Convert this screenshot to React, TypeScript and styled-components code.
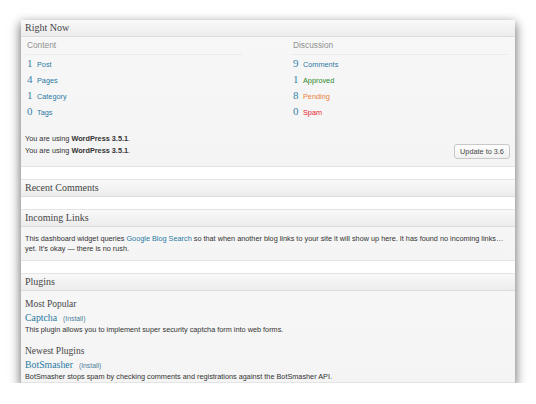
import React from "react";
import styled, { createGlobalStyle } from "styled-components";

const Global = createGlobalStyle`
  html, body { margin: 0; padding: 0; background: #fff; }
  body { font-family: "Liberation Sans", Arial, sans-serif; }
`;

const Frame = styled.div`
  margin: 20px 0 0 21px;
  width: 494px;
  height: 363px;
  background: #fff;
  box-shadow: 0 4px 10px 1px rgba(0, 0, 0, 0.55);
  overflow: hidden;
  display: flex;
  flex-direction: column;
  gap: 12px;
  color: #333;
  font-size: 7.3px;
`;

const Box = styled.section<{ $grow?: boolean }>`
  background: linear-gradient(#f7f7f7, #f4f4f4);
  flex: ${(p) => (p.$grow ? "1" : "none")};
`;

const BoxHeader = styled.h3<{ $first?: boolean }>`
  margin: 0;
  height: 16px;
  line-height: 16px;
  padding: 0 4px;
  border-top: ${(p) => (p.$first ? "none" : "1px solid #e4e4e4")};
  border-bottom: 1px solid #dcdcdc;
  background: linear-gradient(#f9f9f9, #ececec);
  font-family: "Liberation Serif", Georgia, serif;
  font-weight: normal;
  font-size: 10px;
  color: #464646;
`;

const Body = styled.div<{ $pad?: string }>`
  padding: ${(p) => p.$pad || "0 4px"};
  border-bottom: 1px solid #e4e4e4;
`;

const Columns = styled.div`
  display: grid;
  grid-template-columns: 266px 217px;
`;

const Column = styled.div`
  width: 217px;
`;

const ColLabel = styled.div`
  height: 17px;
  line-height: 17px;
  padding-left: 2px;
  border-bottom: 1px solid #ececec;
  font-size: 8.3px;
  color: #8f8f8f;
`;

const Row = styled.div`
  display: flex;
  align-items: baseline;
  height: 16px;
  line-height: 16px;
`;

const Num = styled.span`
  width: 10px;
  margin-left: 2px;
  font-family: "Liberation Serif", Georgia, serif;
  font-size: 11px;
  color: #3582ab;
`;

const Label = styled.a<{ $color?: string }>`
  font-size: 7.3px;
  color: ${(p) => p.$color || "#2a7aa3"};
  text-decoration: none;
`;

const Versions = styled.div`
  margin-top: 14px;
  padding-bottom: 9px;
`;

const VLine = styled.div`
  display: flex;
  align-items: center;
  justify-content: space-between;
  height: 12px;
  line-height: 12px;
`;

const Button = styled.button`
  width: 56px;
  height: 15px;
  padding: 0;
  margin-right: 1px;
  border: 1px solid #c8c8c8;
  border-radius: 3px;
  background: linear-gradient(#fefefe, #f0f0f0);
  font-family: "Liberation Sans", Arial, sans-serif;
  font-size: 7.3px;
  color: #464646;
`;

const Para = styled.p`
  margin: 0;
  line-height: 10px;
  color: #333;
`;

const Link = styled.a`
  color: #2a7aa3;
  text-decoration: none;
`;

const SubHead = styled.h4<{ $gap?: number }>`
  margin: ${(p) => p.$gap ?? 0}px 0 0;
  height: 12px;
  line-height: 12px;
  font-family: "Liberation Serif", Georgia, serif;
  font-weight: normal;
  font-size: 9.5px;
  color: #464646;
`;

const PluginName = styled.div`
  margin-top: 2px;
  height: 12px;
  line-height: 12px;
  font-family: "Liberation Serif", Georgia, serif;
  font-size: 9.8px;
  color: #2a7aa3;
`;

const Install = styled.span`
  margin-left: 6px;
  font-family: "Liberation Sans", Arial, sans-serif;
  font-size: 6.8px;
  color: #4f7d99;
`;

const Desc = styled.div`
  margin-top: 1px;
  line-height: 10px;
`;

const content = [
  ["1", "Post"],
  ["4", "Pages"],
  ["1", "Category"],
  ["0", "Tags"],
];

const discussion: [string, string, string][] = [
  ["9", "Comments", "#2a7aa3"],
  ["1", "Approved", "#2a8a2a"],
  ["8", "Pending", "#e8803a"],
  ["0", "Spam", "#e81e2e"],
];

export default function App() {
  return (
    <>
      <Global />
      <Frame>
        <Box>
          <BoxHeader $first>Right Now</BoxHeader>
          <Body>
            <Columns>
              <Column>
                <ColLabel>Content</ColLabel>
                {content.map(([n, l]) => (
                  <Row key={l}>
                    <Num>{n}</Num>
                    <Label>{l}</Label>
                  </Row>
                ))}
              </Column>
              <Column>
                <ColLabel>Discussion</ColLabel>
                {discussion.map(([n, l, c]) => (
                  <Row key={l}>
                    <Num>{n}</Num>
                    <Label $color={c}>{l}</Label>
                  </Row>
                ))}
              </Column>
            </Columns>
            <Versions>
              <VLine>
                <span>
                  You are using <b>WordPress 3.5.1</b>.
                </span>
              </VLine>
              <VLine>
                <span>
                  You are using <b>WordPress 3.5.1</b>.
                </span>
                <Button>Update to 3.6</Button>
              </VLine>
            </Versions>
          </Body>
        </Box>

        <Box>
          <BoxHeader>Recent Comments</BoxHeader>
        </Box>

        <Box>
          <BoxHeader>Incoming Links</BoxHeader>
          <Body $pad="7px 4px 6px">
            <Para>
              This dashboard widget queries <Link>Google Blog Search</Link> so that when another blog
              links to your site it will show up here. It has found no incoming links… yet. It’s okay
              — there is no rush.
            </Para>
          </Body>
        </Box>

        <Box $grow>
          <BoxHeader>Plugins</BoxHeader>
          <Body $pad="7px 4px 0">
            <SubHead>Most Popular</SubHead>
            <PluginName>
              Captcha<Install>(Install)</Install>
            </PluginName>
            <Desc>This plugin allows you to implement super security captcha form into web forms.</Desc>
            <SubHead $gap={10}>Newest Plugins</SubHead>
            <PluginName>
              BotSmasher<Install>(Install)</Install>
            </PluginName>
            <Desc>BotSmasher stops spam by checking comments and registrations against the BotSmasher API.</Desc>
          </Body>
        </Box>
      </Frame>
    </>
  );
}
